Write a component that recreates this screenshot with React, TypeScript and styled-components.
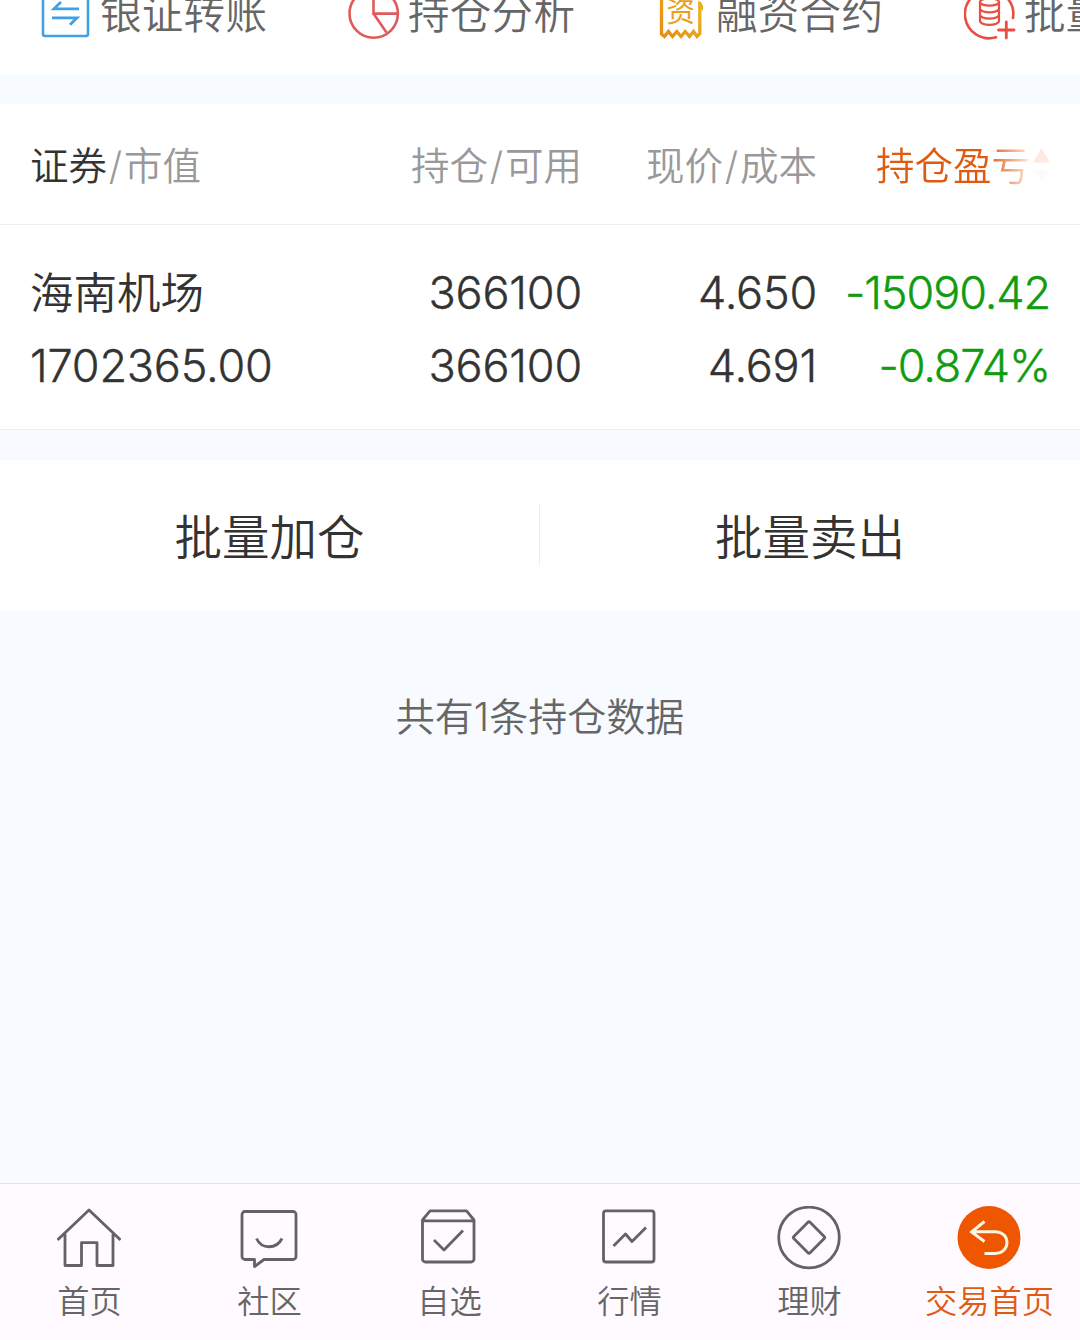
import React from "react";
import styled, { createGlobalStyle } from "styled-components";

const Global = createGlobalStyle`
  html, body { margin: 0; padding: 0; background: #f7faff; }
  * { box-sizing: border-box; }
  body {
    width: 1080px; height: 1340px; overflow: hidden;
    font-family: Inter, "Noto Sans CJK SC", sans-serif;
    font-weight: 350; color: #333;
  }
`;

const Page = styled.div`
  display: flex; flex-direction: column;
  width: 1080px; height: 1340px; overflow: hidden;
  background: #f7faff;
`;

const Shortcuts = styled.div`
  display: flex; flex: none;
  height: 74px; padding-left: 40px; overflow: hidden;
  background: #fff;
`;

const Shortcut = styled.div`
  display: flex; flex: none; align-items: center; gap: 8px;
  width: 308px; height: 52px; margin-top: -12px;
  svg { flex: none; }
`;

const ShortcutLabel = styled.span`
  font-size: 41.5px; line-height: 52px; letter-spacing: 0.3px;
  white-space: nowrap; color: #666;
`;

const Holdings = styled.section`
  flex: none; margin-top: 30px; background: #fff;
  border-bottom: 1px solid #ececec;
`;

const columns = "300px 252px 235px 233px";

const HeadRow = styled.div`
  display: grid; grid-template-columns: ${columns}; align-items: center;
  height: 121px; padding: 4px 30px 0 30px;
  border-bottom: 1px solid #ececec;
`;

const HeadCell = styled.div<{ $end?: boolean }>`
  display: flex; align-items: center;
  justify-content: ${(p) => (p.$end ? "flex-end" : "flex-start")};
  font-size: 38.5px; line-height: 56px; white-space: nowrap; color: #999;
`;

const Strong = styled.span`color: #333;`;

const Slash = styled.span`
  width: 17px; text-align: center;
`;

const SortCell = styled(HeadCell)`
  color: #e05a10; gap: 3px;
  mask-image: linear-gradient(to right, #000 170px, rgba(0, 0, 0, 0.12) 214px);
`;

const DataRow = styled.div`
  display: grid; grid-template-columns: ${columns};
  height: 204px; padding: 31px 30px 0 30px;
`;

const DataCell = styled.div<{ $end?: boolean; $tone?: string; $tracking?: string }>`
  display: flex; flex-direction: column;
  align-items: ${(p) => (p.$end ? "flex-end" : "flex-start")};
  color: ${(p) => p.$tone || "#333"};
  letter-spacing: ${(p) => p.$tracking || "-0.2px"};
`;

const Value = styled.span`
  font-size: 45px; line-height: 73px; white-space: nowrap;
  -webkit-text-stroke: 0.4px currentColor;
`;

const StockName = styled.span`
  font-size: 43.5px; line-height: 73px; letter-spacing: 0; white-space: nowrap;
  height: 73px; padding-top: 1px;
`;

const Actions = styled.div`
  display: grid; grid-template-columns: 539px 1px 540px; align-items: center; flex: none;
  height: 150px; margin-top: 30px; background: #fff;
`;

const Action = styled.button`
  height: 150px; border: 0; background: none; padding: 0 0 2px;
  font: inherit; font-size: 47.5px; color: #333;
`;

const Divider = styled.div`
  width: 1px; height: 60px; background: #ececec;
`;

const Summary = styled.p`
  flex: 1; margin: 0; padding-top: 79px;
  font-size: 39px; line-height: 56px; text-align: center; color: #666;
`;

const TabBar = styled.nav`
  display: grid; grid-template-columns: repeat(6, 1fr); flex: none;
  height: 157px; background: #fffaff; border-top: 1px solid #e4e4e6;
`;

const Tab = styled.div<{ $active?: boolean }>`
  display: flex; flex-direction: column; align-items: center;
  padding: 22px 1px 0 0; gap: 9px;
  font-size: 32.3px; line-height: 46px; white-space: nowrap;
  color: ${(p) => (p.$active ? "#e25a10" : "#666")};
  svg { margin-right: 1px; }
`;

const line = { fill: "none", stroke: "#636363", strokeWidth: 2.8, strokeLinejoin: "round" as const };

const TransferIcon = () => (
  <svg width="52" height="52" viewBox="0 0 52 52" fill="none" stroke="#41a0e3">
    <rect x="3" y="2.5" width="45" height="45.5" rx="2" strokeWidth="2.6" />
    <path d="M39 20.8H14L21 14M12 29.8h25l-7 7" strokeWidth="2.8" />
  </svg>
);

const PieIcon = () => (
  <svg width="52" height="52" viewBox="0 0 52 52" fill="none" stroke="#e05a5c" strokeWidth="2.6">
    <circle cx="25.7" cy="25.5" r="24.2" />
    <path d="M25.5 1v24.6H50M25.5 25.6l13 19" />
  </svg>
);

const SlipGlyph = styled.text`
  font-family: "Noto Sans CJK SC", sans-serif; font-size: 28.5px; font-weight: 400;
`;

const LoanIcon = () => (
  <svg width="52" height="52" viewBox="0 0 52 52" fill="none">
    <defs>
      <linearGradient id="slip" x1="0" y1="1" x2="1" y2="0">
        <stop offset="0" stopColor="#ea8a12" />
        <stop offset="1" stopColor="#e6bd28" />
      </linearGradient>
    </defs>
    <path
      d="M5.500 2V46L8.500 48.500L12.500 43.500L16.500 48.500L20.800 43.500L25 48.500L29.200 43.500L33.500 48.500L37.500 43.500L41 48.500L43.800 45.500V14"
      stroke="url(#slip)" strokeWidth="3.300"
    />
    <path d="M42.500 12l4.500 5.500v5.500l-4.500-5z" fill="#e2b024" />
    <SlipGlyph x="10.500" y="34" fill="#e8a01a">资</SlipGlyph>
  </svg>
);

const CoinsIcon = () => (
  <svg width="52" height="52" viewBox="0 0 52 52" fill="none" stroke="#e84f42" strokeWidth="2.6" strokeLinecap="round">
    <path d="M32 49.300A24.200 24.200 0 1 1 49 30" />
    <ellipse cx="25.500" cy="14" rx="9.500" ry="3.700" strokeWidth="2.200" />
    <path
      d="M16 14v19c0 2.100 4.300 3.800 9.500 3.800s9.500-1.700 9.500-3.800V14M16 20.500c0 2.100 4.300 3.800 9.500 3.800s9.500-1.700 9.500-3.800M16 26.800c0 2.100 4.300 3.800 9.500 3.800s9.500-1.700 9.500-3.800"
      strokeWidth="2.200"
    />
    <path d="M34.500 42h15.500M42.300 34v16" strokeWidth="2.800" />
  </svg>
);

const HomeIcon = () => (
  <svg width="64" height="64" viewBox="0 0 64 64" {...line}>
    <path d="M0.500 34L32 4l31.500 30M8 28v31.500h16.500V36.700H40v22.800h16V28" />
  </svg>
);

const CommunityIcon = () => (
  <svg width="64" height="64" viewBox="0 0 64 64" {...line}>
    <path d="M7 5.500h49a3 3 0 0 1 3 3v42a3 3 0 0 1-3 3H27l-9.500 7v-7H8a3 3 0 0 1-3-3v-42a3 3 0 0 1 3-3z" />
    <path d="M19.500 32.500c5 11 20 11 25.500 0" />
  </svg>
);

const WatchIcon = () => (
  <svg width="64" height="64" viewBox="0 0 64 64" {...line}>
    <path d="M5.500 14L13 4.800h36.500L57 14v39a3 3 0 0 1-3 3H8.500a3 3 0 0 1-3-3zM5.500 14.800H57" />
    <path d="M17 34l10 10 19-19.500" />
  </svg>
);

const MarketIcon = () => (
  <svg width="64" height="64" viewBox="0 0 64 64" {...line}>
    <rect x="6.500" y="4.800" width="50.500" height="51.200" rx="2.500" />
    <path d="M16.500 40l12-12 6.500 7.500 14-14" />
  </svg>
);

const WealthIcon = () => (
  <svg width="64" height="64" viewBox="0 0 64 64" {...line}>
    <circle cx="32" cy="31.500" r="30.300" />
    <rect x="20.500" y="20" width="23" height="23" rx="1.500" transform="rotate(45 32 31.500)" />
  </svg>
);

const TradeIcon = () => (
  <svg width="64" height="64" viewBox="0 0 64 64" fill="none" stroke="#fff5e4" strokeWidth="2.900">
    <circle cx="32" cy="31.500" r="31.500" fill="#ee5600" stroke="none" />
    <path d="M27.500 15.500L14.500 26l13 9.500M15 25.700h23c16 0 16 21.800 0 21.800H27.500" />
  </svg>
);

const SortIcon = () => (
  <svg width="17" height="36" viewBox="0 0 17 36">
    <path d="M8.500 0l8.500 14.500H0z" fill="#ee5600" />
    <path d="M8.500 35l7.500-13H1z" fill="#c9c3dc" opacity=".5" />
  </svg>
);

const shortcuts = [
  { label: "银证转账", Icon: TransferIcon },
  { label: "持仓分析", Icon: PieIcon },
  { label: "融资合约", Icon: LoanIcon },
  { label: "批量", Icon: CoinsIcon },
];

const tabs = [
  { label: "首页", Icon: HomeIcon },
  { label: "社区", Icon: CommunityIcon },
  { label: "自选", Icon: WatchIcon },
  { label: "行情", Icon: MarketIcon },
  { label: "理财", Icon: WealthIcon },
  { label: "交易首页", Icon: TradeIcon, active: true },
];

export default function App() {
  return (
    <Page>
      <Global />
      <Shortcuts>
        {shortcuts.map(({ label, Icon }) => (
          <Shortcut key={label}>
            <Icon />
            <ShortcutLabel>{label}</ShortcutLabel>
          </Shortcut>
        ))}
      </Shortcuts>
      <Holdings>
        <HeadRow>
          <HeadCell><Strong>证券</Strong><Slash>/</Slash>市值</HeadCell>
          <HeadCell $end>持仓<Slash>/</Slash>可用</HeadCell>
          <HeadCell $end>现价<Slash>/</Slash>成本</HeadCell>
          <SortCell $end>持仓盈亏<SortIcon /></SortCell>
        </HeadRow>
        <DataRow>
          <DataCell>
            <StockName>海南机场</StockName>
            <Value>1702365.00</Value>
          </DataCell>
          <DataCell $end>
            <Value>366100</Value>
            <Value>366100</Value>
          </DataCell>
          <DataCell $end>
            <Value>4.650</Value>
            <Value>4.691</Value>
          </DataCell>
          <DataCell $end $tone="#109c10" $tracking="-1.1px">
            <Value>-15090.42</Value>
            <Value>-0.874%</Value>
          </DataCell>
        </DataRow>
      </Holdings>
      <Actions>
        <Action>批量加仓</Action>
        <Divider />
        <Action>批量卖出</Action>
      </Actions>
      <Summary>共有1条持仓数据</Summary>
      <TabBar>
        {tabs.map(({ label, Icon, active }) => (
          <Tab key={label} $active={active}>
            <Icon />
            {label}
          </Tab>
        ))}
      </TabBar>
    </Page>
  );
}
